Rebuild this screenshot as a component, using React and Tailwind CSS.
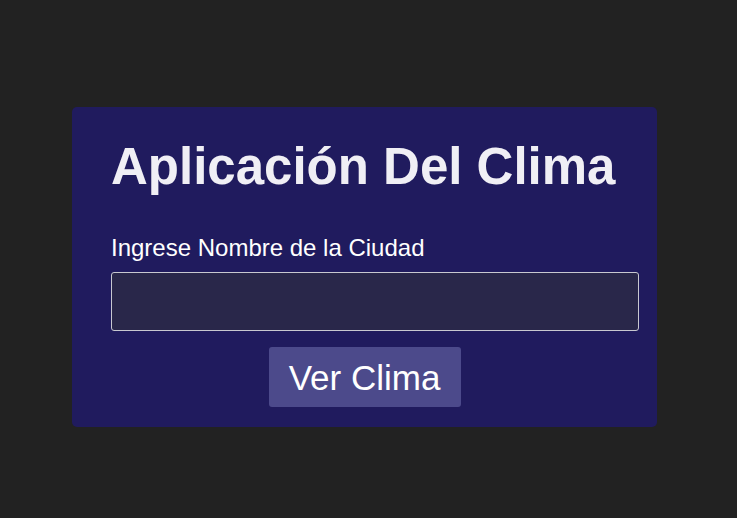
import React, { useState } from 'react';

export default function App() {
  const [city, setCity] = useState('');

  return (
    <div className="w-[737px] h-[518px] bg-[#222222] pt-[107px] pl-[72px] font-['Liberation_Sans',Arial,sans-serif]">
      {/* Weather card */}
      <div className="w-[585px] h-[320px] bg-[#201b5e] rounded-[5px] pt-[34px] pb-[20px]">
        <h1 className="ml-[39px] text-[51px] leading-none font-bold text-[#f0eff5]">
          Aplicación Del Clima
        </h1>
        <label className="block ml-[39px] mt-[44px] text-[24px] leading-none text-white">
          Ingrese Nombre de la Ciudad
        </label>
        <input
          type="text"
          value={city}
          onChange={(e) => setCity(e.target.value)}
          className="block ml-[39px] mt-[12px] w-[528px] h-[59px] bg-[#29274a] border border-[#c8c8d0] rounded-[3px] px-3 text-white text-[20px] outline-none"
        />
        <div className="flex justify-center mt-[16px]">
          <button
            type="button"
            className="w-[192px] h-[60px] bg-[#4c4a8b] rounded-[3px] flex items-center justify-center text-[35px] leading-none text-white"
          >
            Ver Clima
          </button>
        </div>
      </div>
    </div>
  );
}
